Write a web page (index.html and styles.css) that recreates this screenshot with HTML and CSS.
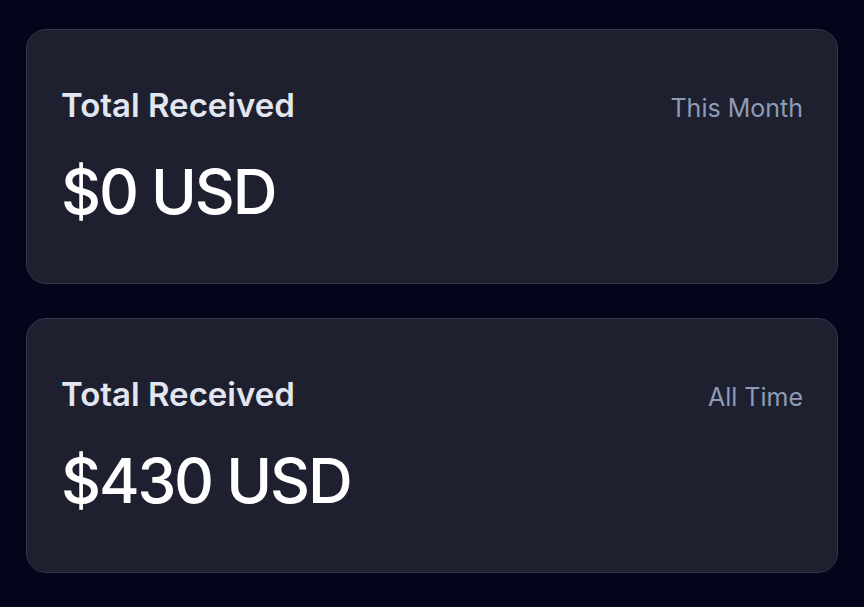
FILE: index.html
```html
<!DOCTYPE html>
<html>
<head>
<meta charset="utf-8">
<link rel="stylesheet" href="styles.css">
</head>
<body>
<main class="stack">
  <section class="card">
    <div class="card-head">
      <h2 class="title">Total Received</h2>
      <span class="period">This Month</span>
    </div>
    <div class="amount">$0 USD</div>
  </section>
  <section class="card">
    <div class="card-head">
      <h2 class="title">Total Received</h2>
      <span class="period">All Time</span>
    </div>
    <div class="amount">$430 USD</div>
  </section>
</main>
</body>
</html>
```
FILE: styles.css
```css
html, body {
  margin: 0;
  background: #03061a;
  font-family: Inter, "Noto Sans", sans-serif;
}
.stack {
  display: flex;
  flex-direction: column;
  gap: 34px;
  padding: 29px 26px;
}
.card {
  box-sizing: border-box;
  height: 255px;
  background: #1e2030;
  border: 1px solid #34374a;
  border-radius: 20px;
  padding: 55px 34px 0 34px;
}
.card-head {
  display: flex;
  justify-content: space-between;
  align-items: baseline;
}
.title {
  margin: 0;
  font-size: 33px;
  font-weight: 600;
  line-height: 40px;
  color: #e2e6f0;
}
.period {
  font-size: 25px;
  font-weight: 400;
  color: #8e9bb6;
}
.amount {
  margin-top: 32px;
  font-size: 62px;
  font-weight: 500;
  line-height: 70px;
  letter-spacing: -0.035em;
  color: #ffffff;
}
```
